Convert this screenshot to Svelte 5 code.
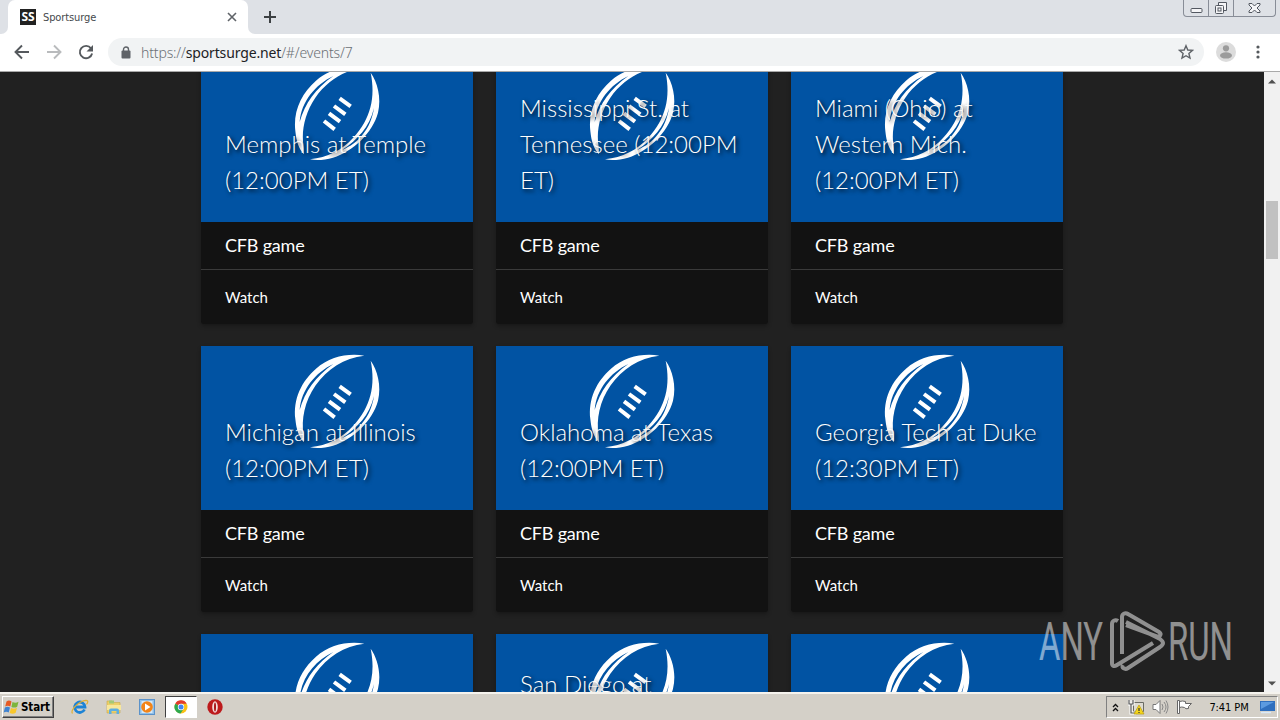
<script>
    const events = [
        { title: "Memphis at Temple (12:00PM ET)", label: "CFB game" },
        { title: "Mississippi St. at Tennessee (12:00PM ET)", label: "CFB game" },
        { title: "Miami (Ohio) at Western Mich. (12:00PM ET)", label: "CFB game" },
        { title: "Michigan at Illinois (12:00PM ET)", label: "CFB game" },
        { title: "Oklahoma at Texas (12:00PM ET)", label: "CFB game" },
        { title: "Georgia Tech at Duke (12:30PM ET)", label: "CFB game" },
        { title: "" },
        { title: "San Diego at", tall: true },
        { title: "" }
    ];
</script>

<div class="screen">
    <header class="tabs">
        <div class="edge"></div>
        <div class="tab">
            <span class="favicon">SS</span>
            <span class="tab-title">Sportsurge</span>
            <svg class="close" width="10" height="10" viewBox="0 0 10 10"><path d="M1 1l8 8M9 1l-8 8" /></svg>
        </div>
        <div class="strip">
            <svg class="plus" width="12" height="12" viewBox="0 0 12 12"><path d="M6 0v12M0 6h12" /></svg>
            <div class="controls">
                <span><svg width="13" height="17" viewBox="0 0 13 17"><rect x="1" y="8.500" width="11" height="4" rx="1" /></svg></span>
                <span><svg width="14" height="17" viewBox="0 0 14 17"><path d="M4.500 5.500v-3h8v8h-3" /><rect x="1.500" y="5.500" width="8" height="8" rx="1" /><rect x="4" y="8" width="3" height="3" /></svg></span>
                <span class="wide"><svg width="13" height="17" viewBox="0 0 13 17"><path d="M1 3.500h3l2.500 2.500 2.500-2.500h3v1.500l-3 3 3 3v1.500H9l-2.500-2.500-2.500 2.500H1V11l3-3-3-3z" /></svg></span>
            </div>
        </div>
    </header>

    <nav class="toolbar">
        <svg class="nav-icon" width="16" height="16" viewBox="0 0 16 16"><path d="M15 8H2M8 1.500L1.500 8 8 14.500" /></svg>
        <svg class="nav-icon dim" width="16" height="16" viewBox="0 0 16 16"><path d="M1 8h13M8 1.500L14.500 8 8 14.500" /></svg>
        <svg class="nav-icon" width="16" height="16" viewBox="0 0 16 16"><path d="M13 4.300A6.200 6.200 0 1 0 14.100 9.500" /><path class="solid" d="M15 1v6.500H8.500z" /></svg>
        <div class="omnibox">
            <svg width="10" height="13" viewBox="0 0 10 13"><path d="M2.500 6V3.500a2.500 2.500 0 0 1 5 0V6" fill="none" stroke="#5f6368" stroke-width="1.400" /><rect x="0.500" y="4.500" width="9" height="8" rx="1" fill="#5f6368" /></svg>
            <span class="url">https://<b>sportsurge.net</b>/#/events/7</span>
            <svg width="16" height="16" viewBox="0 0 16 16"><path d="M8 1.700l1.800 4.300 4.700.4-3.600 3.100 1.100 4.600L8 11.700l-4 2.400 1.100-4.600-3.600-3.100 4.700-.4z" fill="none" stroke="#5f6368" stroke-width="1.400" /></svg>
        </div>
        <svg class="avatar" width="20" height="20" viewBox="0 0 20 20"><circle cx="10" cy="10" r="10" fill="#dcdcdc" /><circle cx="10" cy="6.300" r="3.100" fill="#9b9b9b" /><ellipse cx="10" cy="13.400" rx="6" ry="3.200" fill="#9b9b9b" /></svg>
        <svg class="dots" width="4" height="14" viewBox="0 0 4 14"><circle cx="2" cy="2" r="1.600" /><circle cx="2" cy="7" r="1.600" /><circle cx="2" cy="12" r="1.600" /></svg>
    </nav>

    <div class="view">
        <main>
            <div class="grid">
                {#each events as event}
                    <article class="card">
                        <div class="media">
                            <svg class="ball" width="95" height="105" viewBox="0 0 285 315">
                                <path d="M223 23C174 15 119 26 78 62C34 100 9 154 16 213C19 245 27 268 42 283C41 276 42 268 41 261C33 214 44 160 76 113C112 62 162 30 223 23Z" />
                                <path d="M242 38C262 66 275 113 264 158C248 218 190 274 129 293C105 300 80 302 60 298C113 292 155 271 189 234C243 176 257 111 242 38Z" />
                                <path class="seam" d="M130 48C76 74 34 124 29 186C45 130 76 86 130 48Z" />
                                <path class="seam" d="M252 144C238 202 204 238 156 270C206 250 243 205 252 144Z" />
                                <path class="lace" d="M149 115L182 139M132 138L166 163M117 160L150 185M102 183L134 208" />
                            </svg>
                            <h2 class:tall={event.tall}>{event.title}</h2>
                        </div>
                        {#if event.label}
                            <div class="label">{event.label}</div>
                            <div class="actions">Watch</div>
                        {/if}
                    </article>
                {/each}
            </div>
        </main>
        <aside class="scroll">
            <svg width="8" height="5" viewBox="0 0 8 5"><path d="M0 4.500L4 0.500l4 4z" /></svg>
            <div class="thumb"></div>
            <svg class="down" width="8" height="5" viewBox="0 0 8 5"><path d="M0 0.500l4 4 4-4z" /></svg>
        </aside>
        <svg class="watermark" width="200" height="70" viewBox="0 0 200 70">
            <text x="5" y="54" textLength="64" lengthAdjust="spacingAndGlyphs">ANY</text>
            <text x="134" y="54" textLength="65" lengthAdjust="spacingAndGlyphs">RUN</text>
            <path d="M84 15c-3-2-6 0-6 3v39c0 3 2 4 5 2l36-22M88 48V11c0-3 3-5 6-3l31 18c3 2 1 6-3 4L92 19M89 59c-2 3 2 5 5 3l32-21c4-3 4-5 0-8L92 16" />
        </svg>
    </div>

    <footer>
        <div class="start">
            <svg width="17" height="16" viewBox="0 0 16 16">
                <path d="M3 2.500C5 1 6.500 1.500 8 2.500L6.800 7.500C5 6.500 3.500 6.500 1.700 7.500z" fill="#e65a24" />
                <path d="M9 3c2 1 4 1 6-.3l-1.300 5C12 8.800 10 8.800 7.900 7.900z" fill="#7db53c" />
                <path d="M1.400 8.600c2-1.100 3.400-1 5.100 0L5.200 13.500C3.500 12.500 2 12.500.2 13.500z" fill="#3f83d1" />
                <path d="M7.500 9c2 1 4 1 6-.2l-1.300 5c-2 1.200-4 1.200-6 .1z" fill="#f8c72c" />
            </svg>
            <b>Start</b>
        </div>
        <div class="launch">
            <svg width="18" height="16" viewBox="0 0 18 16"><path d="M13.500 10.500A5.200 5.200 0 1 1 14 8H5" fill="none" stroke="#1d83d5" stroke-width="2.800" /><path d="M1.500 14.500C-1 11 8 2 15 1.300c3 0 1.500 3 .5 4" fill="none" stroke="#e0b035" stroke-width="1.200" /></svg>
        </div>
        <div class="launch">
            <svg width="16" height="16" viewBox="0 0 16 16"><path d="M1 2h5l1 1.500h7V14H1z" fill="#edcf67" stroke="#c9a94b" stroke-width=".6" /><path d="M3 1.500h5v3H3z" fill="#a3c977" /><path d="M1 6h14v5H1z" fill="#f8e79b" /><path d="M3 15v-3.500q0-2 2-2h6q2 0 2 2V15h-2.500v-3h-5v3z" fill="#5eaee0" /></svg>
        </div>
        <div class="launch">
            <svg width="16" height="16" viewBox="0 0 16 16"><rect x=".5" y=".5" width="15" height="15" fill="#8fc0e9" stroke="#5b92c9" /><rect x="2.500" y="2" width="11" height="12" fill="#d5e8f8" /><circle cx="8" cy="8" r="5.800" fill="#f28418" /><path d="M6 4.500v7L11.500 8z" fill="#fff" /></svg>
        </div>
        <div class="launch active">
            <svg width="14" height="14" viewBox="0 0 14 14"><circle cx="7" cy="7" r="6.500" fill="#fbc116" /><path d="M7 7L1.300 3.700A6.500 6.500 0 0 1 12.700 3.800H7z" fill="#e33b2e" /><path d="M7 7L1.300 3.700A6.500 6.500 0 0 0 6.500 13.500L9.500 9z" fill="#2da94f" /><circle cx="7" cy="7" r="3.200" fill="#fff" /><circle cx="7" cy="7" r="2.500" fill="#4285f4" /></svg>
        </div>
        <div class="launch">
            <svg width="16" height="16" viewBox="0 0 16 16"><circle cx="8" cy="8" r="7.700" fill="#bd1a1c" /><ellipse cx="8" cy="8" rx="2.800" ry="5.700" fill="#f3dcdc" /><ellipse cx="8" cy="8" rx="1" ry="4.600" fill="#a91518" /></svg>
        </div>
        <div class="tray">
            <svg width="7" height="9" viewBox="0 0 7 9"><path d="M1 4l2.500-2.500L6 4M1 8l2.500-2.500L6 8" fill="none" stroke="#111" stroke-width="1.300" /></svg>
            <svg class="network" width="17" height="16" viewBox="0 0 17 16"><path d="M5.500 3.500h10v9h-10z" fill="#dedbd2" stroke="#6b6b65" /><path d="M1 1v4h4V1M3 5v9h5" fill="none" stroke="#fff" stroke-width="3" /><path d="M1 1v4h4V1M3 5v9h5" fill="none" stroke="#555" stroke-width="1.200" /><path d="M11 6l5 9H6z" fill="#f4d51c" stroke="#b89b10" stroke-width=".7" /><path d="M11 9v3M11 13v1" stroke="#333" stroke-width="1.200" /></svg>
            <svg class="sound" width="17" height="16" viewBox="0 0 17 16"><path d="M1 5.500h3l4-4v13l-4-4H1z" fill="#fff" stroke="#777" /><path d="M10 5q2 3 0 6M12 3q4 5 0 10M14 1.500q4 6.500 0 13" fill="none" stroke="#888" /></svg>
            <svg class="flag" width="17" height="16" viewBox="0 0 17 16"><path d="M1.500 1.500h2v13h-2zM3.500 2.500q3-1 6 0v2h6l-3 3 0 2q-3 1-4-1-3-1-5 0z" fill="#fff" stroke="#666" /></svg>
            <time>7:41 PM</time>
            <svg class="desktop" width="16" height="14" viewBox="0 0 16 14"><path d="M0 1h15v10H0z" fill="#2f6fbe" /><path d="M1 2h13L1 9z" fill="#5b9ae0" /><path d="M1 12.500h10" stroke="#d9e9f8" stroke-width="1.500" /></svg>
        </div>
    </footer>
</div>

<style>
    :global(body) {
        overflow: hidden;
    }

    .screen {
        width: 1280px;
        height: 720px;
        display: flex;
        flex-direction: column;
        overflow: hidden;
        background: #212121;
    }

    svg {
        display: block;
        flex: none;
    }

    /* Browser chrome */
    .tabs {
        height: 34px;
        display: flex;
        background: #fff;
    }

    .edge {
        width: 8px;
        background: #dee1e6;
        border-bottom-right-radius: 7px;
    }

    .tab {
        width: 240px;
        box-sizing: border-box;
        padding: 0 11px 0 12px;
        display: flex;
        align-items: center;
        background: linear-gradient(#dee1e6 50%, #fff 50%);
        position: relative;
        z-index: 0;
    }

    .tab::before {
        content: "";
        position: absolute;
        inset: 0;
        z-index: -1;
        background: #fff;
        border-radius: 7px 7px 0 0;
    }

    .favicon {
        width: 16px;
        height: 16px;
        margin-right: 7px;
        background: #222;
        color: #fff;
        font: bold 12px/16px "Open Sans", sans-serif;
        text-align: center;
    }

    .tab-title {
        flex: 1;
        color: #45494d;
        font: 11px "DejaVu Sans Condensed", "DejaVu Sans", sans-serif;
        font-stretch: condensed;
        letter-spacing: -0.1px;
    }

    .close {
        fill: none;
        stroke: #5f6368;
        stroke-width: 1.6;
    }

    .strip {
        flex: 1;
        padding: 0 4px 0 16px;
        display: flex;
        align-items: center;
        justify-content: space-between;
        background: #dee1e6;
        border-bottom-left-radius: 7px;
    }

    .plus {
        stroke: #3c4043;
        stroke-width: 2;
    }

    .controls {
        height: 16px;
        align-self: flex-start;
        display: flex;
        border: 1px solid #888d97;
        border-top: none;
        border-radius: 0 0 4px 4px;
    }

    .controls span {
        width: 24px;
        display: flex;
        justify-content: center;
        border-right: 1px solid #888d97;
    }

    .controls .wide {
        width: 41px;
        border: none;
    }

    .controls svg {
        fill: #f5f5f7;
        stroke: #535861;
    }

    .toolbar {
        height: 38px;
        box-sizing: border-box;
        padding: 0 20px 1px 14px;
        display: flex;
        align-items: center;
        gap: 16px;
        background: #fff;
        border-bottom: 1px solid #a9a9a9;
    }

    .nav-icon {
        fill: none;
        stroke: #55595d;
        stroke-width: 1.9;
    }

    .dim {
        stroke: #b9bbbd;
    }

    .solid {
        fill: #55595d;
        stroke: none;
    }

    .omnibox {
        flex: 1;
        height: 28px;
        margin-left: -2px;
        margin-right: -4px;
        padding: 0 10px 0 13px;
        display: flex;
        align-items: center;
        background: #f1f3f4;
        border-radius: 14px;
    }

    .url {
        flex: 1;
        margin-left: 10px;
        color: #6b7075;
        font: 14px "Noto Sans", sans-serif;
        font-weight: 300;
        letter-spacing: -0.15px;
    }

    .url b {
        color: #202124;
        font-weight: 400;
    }

    .avatar {
        margin-right: 4px;
    }

    .dots {
        fill: #55595d;
    }

    /* Page */
    .view {
        height: 620px;
        display: flex;
        position: relative;
        overflow: hidden;
    }

    main {
        flex: 1;
        overflow: hidden;
    }

    .grid {
        margin: -14px 0 0 201px;
        display: grid;
        grid-template-columns: repeat(3, 272px);
        gap: 22px 23px;
        font-family: Lato, sans-serif;
        color: #fff;
    }

    .card {
        height: 266px;
        background: #121212;
        border-radius: 3px;
        box-shadow: 0 2px 4px rgba(0, 0, 0, 0.3);
    }

    .media {
        height: 164px;
        display: grid;
        background: #0153a3;
    }

    .ball {
        grid-area: 1 / 1;
        margin: 2px 0 0 89px;
        fill: #fff;
    }

    .seam {
        fill: #0153a3;
    }

    .lace {
        fill: none;
        stroke: #fff;
        stroke-width: 12;
    }

    h2 {
        grid-area: 1 / 1;
        align-self: end;
        margin: 0;
        padding: 0 24px 24px;
        font-size: 24px;
        font-weight: 300;
        line-height: 36px;
        text-shadow: 2px 2px 4px #000;
        z-index: 1;
    }

    .tall {
        padding-bottom: 96px;
    }

    .label {
        height: 47px;
        padding: 0 24px;
        font-size: 18px;
        line-height: 47px;
        letter-spacing: -0.2px;
    }

    .actions {
        height: 54px;
        padding: 0 24px;
        border-top: 1px solid #3a3a3a;
        font-size: 15px;
        line-height: 55px;
    }

    .scroll {
        width: 16px;
        box-sizing: border-box;
        padding: 7px 0 6px;
        display: flex;
        flex-direction: column;
        align-items: center;
        background: #f1f1f1;
        fill: #505050;
    }

    .thumb {
        width: 12px;
        height: 58px;
        margin-top: 117px;
        background: #c1c1c1;
    }

    .down {
        margin-top: auto;
    }

    .watermark {
        position: absolute;
        left: 1034px;
        top: 534px;
        opacity: 0.5;
        fill: #fff;
        font: 400 53px Roboto, sans-serif;
    }

    .watermark path {
        fill: none;
        stroke: #fff;
        stroke-width: 4;
    }

    /* Taskbar */
    footer {
        height: 28px;
        box-sizing: border-box;
        padding: 2px;
        display: flex;
        align-items: center;
        background: #d4d0c8;
        border-top: 2px solid #f5f3ee;
    }

    .start {
        width: 52px;
        height: 22px;
        margin-right: 10px;
        box-sizing: border-box;
        display: flex;
        align-items: center;
        gap: 1px;
        border: 1px solid;
        border-color: #fff #404040 #404040 #fff;
        box-shadow: inset -1px -1px #808080;
        font: 11.5px "DejaVu Sans Condensed", "DejaVu Sans", sans-serif;
        font-stretch: condensed;
        letter-spacing: -0.1px;
    }

    .launch {
        width: 32px;
        height: 22px;
        margin-right: 1.7px;
        box-sizing: border-box;
        display: flex;
        align-items: center;
        justify-content: center;
    }

    .active {
        background: #fff;
        border: 1px solid;
        border-color: #404040 #fff #fff #404040;
    }

    .tray {
        width: 172px;
        height: 22px;
        margin-left: auto;
        box-sizing: border-box;
        padding: 0 1px 0 5px;
        display: flex;
        align-items: center;
        border: 1px solid;
        border-color: #808080 #fff #fff #808080;
    }

    .network {
        margin-left: 9px;
    }

    .sound,
    .flag {
        margin-left: 7px;
    }

    time {
        flex: 1;
        text-align: center;
        padding-left: 5px;
        font: 11px "DejaVu Sans Condensed", "DejaVu Sans", sans-serif;
        font-stretch: condensed;
        letter-spacing: -0.1px;
    }
</style>
